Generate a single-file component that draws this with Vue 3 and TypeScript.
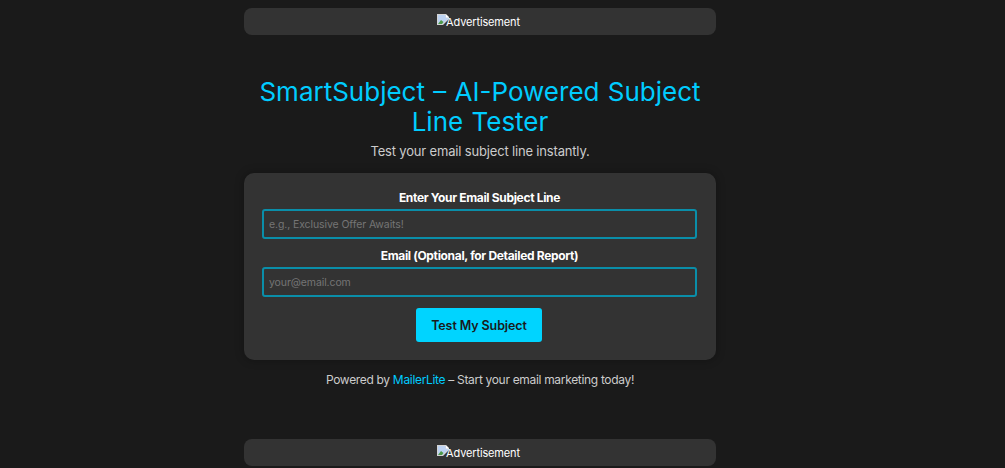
<script setup lang="ts">
const adLabel: string = 'Advertisement'
</script>

<template>
  <div class="page">
    <div class="ad">
      <svg class="broken" width="16" height="16" viewBox="0 0 16 16" aria-hidden="true">
        <path d="M0 2h9l3 3v2l-6 6H0z" fill="#d4d4d4" />
        <path d="M1 3h7.500v2.500H11v1L5.500 12H1z" fill="#bcd2f2" />
        <path d="M1 12l3-4 2.500 2-1.500 2z" fill="#4f9a4a" />
        <path d="M9 2.500l3 3H9z" fill="#ffffff" />
      </svg>
      <span class="alt">{{ adLabel }}</span>
    </div>

    <h1 class="title">SmartSubject – AI-Powered Subject Line Tester</h1>
    <p class="sub">Test your email subject line instantly.</p>

    <form class="card" @submit.prevent>
      <label class="label" for="subject">Enter Your Email Subject Line</label>
      <input id="subject" class="field" type="text" placeholder="e.g., Exclusive Offer Awaits!" />
      <label class="label" for="email">Email (Optional, for Detailed Report)</label>
      <input id="email" class="field" type="email" placeholder="your@email.com" />
      <button class="btn" type="submit">Test My Subject</button>
    </form>

    <p class="foot">Powered by <a href="#">MailerLite</a> – Start your email marketing today!</p>

    <div class="ad ad-bottom">
      <svg class="broken" width="16" height="16" viewBox="0 0 16 16" aria-hidden="true">
        <path d="M0 2h9l3 3v2l-6 6H0z" fill="#d4d4d4" />
        <path d="M1 3h7.500v2.500H11v1L5.500 12H1z" fill="#bcd2f2" />
        <path d="M1 12l3-4 2.500 2-1.500 2z" fill="#4f9a4a" />
        <path d="M9 2.500l3 3H9z" fill="#ffffff" />
      </svg>
      <span class="alt">{{ adLabel }}</span>
    </div>
  </div>
</template>

<style>
html, body { margin: 0; background: #1a1a1a; }
</style>

<style scoped>
.page {
  width: 960px;
  padding-top: 8px;
  display: flex;
  flex-direction: column;
  align-items: center;
  font-family: Inter, "Open Sans", sans-serif;
  color: #ccc;
  text-align: center;
  height: 460px;
  overflow: hidden;
}
.ad {
  width: 472px;
  height: 27px;
  background: #333;
  border-radius: 8px;
  display: flex;
  align-items: center;
  justify-content: center;
  flex: none;
}
.ad-bottom { margin-top: 49px; }
.broken { margin-right: -7px; margin-top: -4px; flex: none; }
.alt { color: #fff; font-size: 11px; letter-spacing: -0.15px; line-height: 16px; margin-right: 3px; }
.title {
  width: 472px;
  margin: 42px 0 0;
  font-size: 26px;
  word-spacing: 1px;
  line-height: 30px;
  font-weight: 400;
  color: #00ccff;
}
.sub { margin: 4px 0 0; font-size: 13px; letter-spacing: -0.17px; line-height: 20px; }
.card {
  margin-top: 12px;
  width: 472px;
  box-sizing: border-box;
  height: 187px;
  background: #333;
  border-radius: 10px;
  padding: 15px 19px 0 18px;
  box-shadow: 0 0 10px rgba(0, 0, 0, .3);
  display: flex;
  flex-direction: column;
  align-items: center;
}
.label { color: #fff; font-weight: 700; font-size: 12px; letter-spacing: -0.33px; line-height: 20px; margin-bottom: 1px; }
.field {
  width: 100%;
  box-sizing: border-box;
  height: 30px;
  margin-bottom: 7px;
  padding: 0 5px;
  background: #333;
  border: 2px solid #0a8ea9;
  border-radius: 3px;
  outline: none;
  font: 10.5px Inter, sans-serif;
  letter-spacing: -0.1px;
  color: #fff;
}
.field::placeholder { color: #757575; opacity: 1; }
.btn {
  margin: 4px 1px 0 0;
  width: 126px;
  height: 34px;
  background: #00d4ff;
  color: #1a1a1a;
  border: 0;
  border-radius: 3px;
  font: 600 12.5px Inter, sans-serif;
  letter-spacing: -0.1px;
}
.foot { margin: 10px 0 0; font-size: 12px; letter-spacing: -0.32px; line-height: 20px; }
.foot a { color: #00ccff; text-decoration: none; }
</style>
